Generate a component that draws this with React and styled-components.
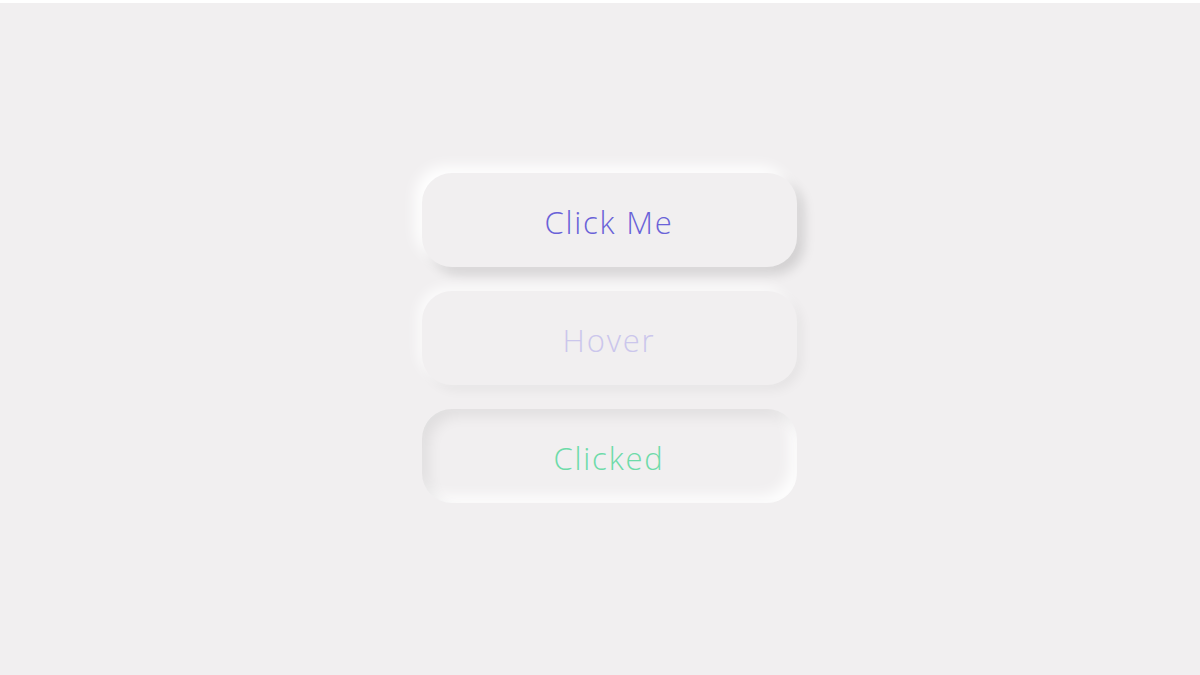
import React from 'react';
import styled, { createGlobalStyle, css } from 'styled-components';

const GlobalStyle = createGlobalStyle`
  html, body {
    margin: 0;
    padding: 0;
    background: #f1eff0;
  }
  body {
    font-family: 'Open Sans', 'Liberation Sans', sans-serif;
  }
`;

const Page = styled.div`
  box-sizing: border-box;
  height: 675px;
  border-top: 3px solid #ffffff;
  background: #f1eff0;
  display: flex;
  align-items: center;
  justify-content: center;
`;

const Stack = styled.div`
  display: flex;
  flex-direction: column;
  gap: 24px;
  margin: -3px 0 0 18px;
`;

const variants = {
  raised: css`
    color: #6a62d8;
    box-shadow: -7px -7px 14px rgba(255, 255, 255, 0.95),
      7px 7px 12px rgba(0, 0, 0, 0.13);
  `,
  hover: css`
    color: #cbc6ec;
    box-shadow: -5px -5px 12px rgba(255, 255, 255, 0.7),
      5px 5px 12px rgba(0, 0, 0, 0.05);
  `,
  pressed: css`
    color: #6edba9;
    box-shadow: inset 7px 7px 14px rgba(0, 0, 0, 0.07),
      inset -7px -7px 14px rgba(255, 255, 255, 0.9);
  `,
};

const Button = styled.button`
  width: 375px;
  height: 94px;
  padding: 4px 0 0;
  border: none;
  border-radius: 30px;
  background: #f1eff0;
  font-family: 'Open Sans', 'Liberation Sans', sans-serif;
  font-size: 31px;
  font-weight: 300;
  letter-spacing: 1.8px;
  cursor: pointer;
  outline: none;
  ${(p) => variants[p.$variant]}
`;

export default function App() {
  return (
    <>
      <GlobalStyle />
      <Page>
        <Stack>
          <Button $variant="raised">Click Me</Button>
          <Button $variant="hover">Hover</Button>
          <Button $variant="pressed">Clicked</Button>
        </Stack>
      </Page>
    </>
  );
}
